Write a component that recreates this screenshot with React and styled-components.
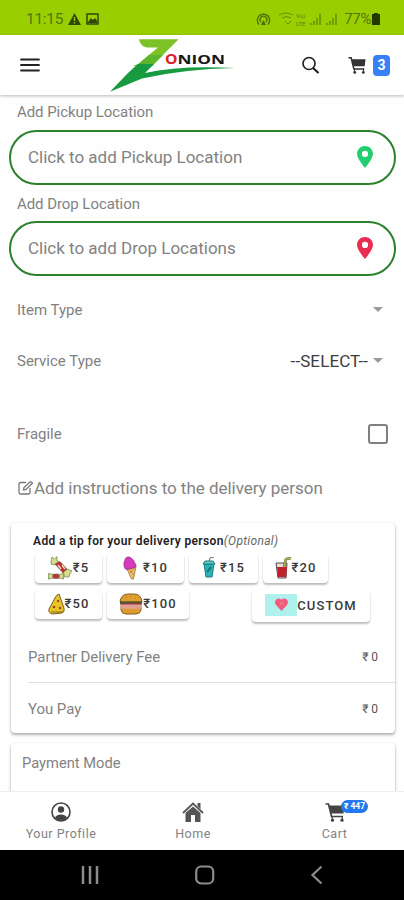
import React from "react";
import styled, { createGlobalStyle } from "styled-components";

const GlobalStyle = createGlobalStyle`
  * {
    box-sizing: border-box;
  }
  body {
    margin: 0;
    background: #fff;
    font-family: Roboto, "Noto Sans", sans-serif;
    color: #828282;
  }
  svg {
    display: block;
    flex: none;
  }
`;

const Screen = styled.div`
  width: 404px;
  height: 900px;
  display: flex;
  flex-direction: column;
  overflow: hidden;
  background: #fefefe;
`;

const StatusBar = styled.div`
  height: 35px;
  flex: none;
  display: flex;
  align-items: center;
  padding: 3px 24px 0 26px;
  background: #99cf00;
  color: #56750c;
  font-size: 15.5px;
`;
const Clock = styled.span`
  width: 42px;
  letter-spacing: -0.3px;
`;
const StatusIcons = styled.div`
  display: flex;
  align-items: center;
  gap: 5px;
  flex: 1;
`;
const Battery = styled.span`
  margin-left: 2px;
  margin-right: 1px;
  font-size: 15px;
  letter-spacing: -0.4px;
`;

const Header = styled.header`
  height: 60px;
  flex: none;
  display: flex;
  align-items: center;
  padding: 0 14px 0 20px;
  background: #fff;
  box-shadow: 0 1px 3px rgba(0, 0, 0, 0.28);
  z-index: 1;
`;
const LogoSlot = styled.div`
  margin-left: 68px;
  margin-right: 65px;
`;
const CartCount = styled.span`
  width: 17px;
  height: 21px;
  margin-left: 7px;
  border-radius: 4px;
  background: #3880f8;
  color: #fff;
  font-size: 14px;
  font-weight: 700;
  line-height: 20px;
  text-align: center;
`;

const Content = styled.main`
  flex: 1;
  min-height: 0;
  overflow: hidden;
  padding-top: 2px;
`;
const FieldLabel = styled.div`
  height: ${(p) => p.$height}px;
  padding-left: 17px;
  line-height: ${(p) => p.$line}px;
  font-size: 15px;
  letter-spacing: -0.06px;
`;
const Pill = styled.div`
  height: 55px;
  margin: 0 8px 0 9px;
  padding: 0 21px 2px 17px;
  display: flex;
  align-items: center;
  justify-content: space-between;
  border: 2px solid #2c812f;
  border-radius: 28px;
  font-size: 17px;
`;

const Row = styled.div`
  height: ${(p) => p.$height}px;
  display: flex;
  align-items: center;
  margin-top: ${(p) => p.$top || 0}px;
  padding: 0 21px 0 17px;
  font-size: 15px;
`;
const Spacer = styled.span`
  flex: 1;
`;
const Value = styled.span`
  color: #3c3c3c;
  font-size: 17px;
  letter-spacing: 0.1px;
`;
const Caret = styled.span`
  margin: 0 0 1px 5px;
  border: 5px solid transparent;
  border-top-color: #999;
  border-bottom: 0;
`;
const Checkbox = styled.span`
  width: 20px;
  height: 20px;
  margin-right: -5px;
  border: 2px solid #808080;
  border-radius: 3px;
`;
const Instructions = styled.div`
  height: 61px;
  display: flex;
  align-items: center;
  padding: 0 0 9px 17px;
  font-size: 17px;
  letter-spacing: -0.03px;
`;

const Card = styled.section`
  height: ${(p) => p.$height}px;
  margin: 0 9px 10px 11px;
  border-radius: 4px;
  background: #fff;
  box-shadow: 0 2px 3px rgba(0, 0, 0, 0.3), 0 0 2px rgba(0, 0, 0, 0.1);
`;
const TipTitle = styled.div`
  height: 31px;
  padding: 9px 0 0 22px;
  color: #222;
  font-size: 12px;
  font-weight: 600;
  line-height: 18px;
  letter-spacing: 0.37px;
  white-space: nowrap;

  em {
    color: #666;
    font-weight: 400;
    letter-spacing: 0.3px;
  }
`;
const Tips = styled.div`
  display: flex;
  height: ${(p) => p.$height}px;
  padding-left: 24px;
  gap: 5px;
`;
const TipButton = styled.div`
  width: ${(p) => p.$width}px;
  height: ${(p) => p.$height || 29}px;
  margin-left: ${(p) => p.$push || 0}px;
  display: flex;
  align-items: center;
  justify-content: center;
  gap: ${(p) => p.$gap || 0}px;
  padding-bottom: 2px;
  border-radius: 4px;
  background: #fff;
  box-shadow: 0 2px 2px rgba(0, 0, 0, 0.25), 0 0 2px rgba(0, 0, 0, 0.06);
  color: #3a3a3a;
  font-size: 13px;
  font-weight: 500;
  letter-spacing: 1.1px;
  white-space: nowrap;
`;
const FeeRow = styled.div`
  height: 51px;
  margin-left: 17px;
  padding-right: 17px;
  display: flex;
  align-items: center;
  justify-content: space-between;
  border-bottom: ${(p) => (p.$line ? "1px solid #ddd" : "0")};
  font-size: 15px;
  letter-spacing: -0.06px;
`;
const Amount = styled.span`
  color: #555;
  font-size: 12px;
`;
const CardTitle = styled.div`
  padding: 11px 0 0 11px;
  font-size: 14.7px;
  line-height: 18px;
`;

const TabBar = styled.nav`
  height: 59px;
  flex: none;
  display: flex;
  padding: 0 0 0 1px;
  border-top: 1px solid #eee;
  background: #fff;
  z-index: 1;
`;
const Tab = styled.div`
  position: relative;
  width: ${(p) => p.$width}px;
  display: flex;
  flex-direction: column;
  align-items: center;
  padding-top: 10px;
  font-size: 12.5px;
  line-height: 15px;
  letter-spacing: 0.5px;

  svg {
    margin-bottom: 4px;
  }
`;
const TabBadge = styled.span`
  position: absolute;
  top: 8px;
  left: 76px;
  width: 27px;
  height: 13px;
  border-radius: 7px;
  background: #2478f0;
  color: #fff;
  font-size: 8.5px;
  font-weight: 700;
  line-height: 13px;
  letter-spacing: 0;
  text-align: center;
`;
const SystemBar = styled.div`
  height: 50px;
  flex: none;
  display: flex;
  align-items: center;
  justify-content: space-between;
  padding: 0 80px;
  background: #000;
`;

const Logo = () => (
  <svg width="128" height="56" viewBox="0 0 128 56">
    <path d="M31 2.3H70.5L44 29H25L30 27L50 10.5H39Q32 9 31 2.3Z" fill="#7cc125" />
    <path d="M34 24L41 18H55L44 29L40 32L25 32Z" fill="#5cb52c" />
    <path d="M30 27H46L37 36Q72 28 127 31Q76 32 34 41.5L2 54.8L20 36Z" fill="#179a40" />
    <g fontFamily="'Open Sans', sans-serif" fontWeight="700">
      <text x="57" y="27.4" fontSize="13.5" fill="#d9202c" textLength="12.5" lengthAdjust="spacingAndGlyphs">O</text>
      <text x="69.5" y="27.4" fontSize="13" fill="#171717" textLength="47.5" lengthAdjust="spacingAndGlyphs">NION</text>
    </g>
  </svg>
);

const CartIcon = ({ size, color = "#333" }) => (
  <svg width={size} height={size} viewBox="0 0 20 20" fill="none" stroke={color}>
    <path d="M0.5 2H3.5L6.5 14.5H18" strokeWidth="1.7" />
    <path d="M4 3.5H19.5L18.5 11.5H6Z" fill={color} stroke="none" />
    <circle cx="7.5" cy="18.2" r="1.6" fill={color} stroke="none" />
    <circle cx="17" cy="18.2" r="1.6" fill={color} stroke="none" />
    <path d="M7.2 14V17M17.3 14V17" strokeWidth="1.2" />
  </svg>
);

const Pin = ({ color }) => (
  <svg width="16" height="22" viewBox="0 0 16 22">
    <path
      d="M8 0C3.6 0 0 3.4 0 7.8C0 13 8 22 8 22S16 13 16 7.8C16 3.4 12.4 0 8 0ZM8 11A3.1 3.1 0 1 1 8 4.8A3.1 3.1 0 0 1 8 11Z"
      fill={color}
      fillRule="evenodd"
    />
  </svg>
);

const Candy = () => (
  <svg width="25" height="24" viewBox="0 0 25 24" stroke="#5d6540" strokeWidth="0.6">
    <path d="M3 6L4 1L6.5 3L9 0.5V5L11 6L7 9L3 8Z" fill="#d6dd88" />
    <path d="M7 8L12 5.5L19 13L15 17Z" fill="#c72b38" />
    <path d="M10 9L13 13M14 9L17 13" stroke="#eee8c4" strokeWidth="1.3" />
    <path d="M15.5 16.5L19 13L24 15L22 17.5L21 21L16.5 21Z" fill="#d6dd88" />
    <path d="M0.5 17.5L5 18.5V22L0.5 23ZM11 18.5L15.5 17.5V23L11 22Z" fill="#d6dd88" />
    <rect x="5" y="18" width="6" height="4.5" rx="1.5" fill="#c72b38" />
  </svg>
);

const IceCream = () => (
  <svg width="14" height="24" viewBox="0 0 14 24" strokeWidth="0.7">
    <path d="M3.5 12L13 10.5L10.5 23H8.5Z" fill="#f1bf60" stroke="#8b6134" />
    <path d="M6 13L11 19M11.5 12L7 17" stroke="#95683d" strokeWidth="0.6" />
    <path d="M1 8C0.5 6 2 5 2 3.5C2.5 0.5 7 0 8.5 2.5C11 3.5 11 6 12.5 8C14 10.5 12 12 10 12L4 13.5C1 13 1 10 1 8Z" fill="#d43abb" stroke="#8d287e" />
  </svg>
);

const Cup = () => (
  <svg width="14" height="21" viewBox="0 0 14 21">
    <path d="M7 5L8 1L12 0" fill="none" stroke="#4d7775" />
    <path d="M2 7L4 20H10L12 7Z" fill="#24b6b6" stroke="#28777b" />
    <path d="M1 7L3 4H11L13 7Z" fill="#59cccb" stroke="#28777b" />
    <path d="M5 15L9 10" stroke="#176d70" strokeWidth="2" />
  </svg>
);

const Juice = () => (
  <svg width="17" height="22" viewBox="0 0 17 22">
    <path d="M1 6H12L11 21H3Z" fill="#e7dfdf" stroke="#54494b" />
    <path d="M2 10H12L11 20H3Z" fill="#c3202d" />
    <path d="M9 10L11 2L16 1" fill="none" stroke="#58612d" strokeWidth="2.6" />
    <path d="M9 10L11 2L16 1" fill="none" stroke="#b0b750" strokeWidth="1.5" />
  </svg>
);

const Pizza = () => (
  <svg width="17" height="22" viewBox="0 0 17 22">
    <path d="M11 1Q8 2 7 5L1 16Q0 20 4 21L14 20Q17 19 16 15Z" fill="#e8c628" stroke="#755d22" />
    <circle cx="10" cy="8" r="1.2" fill="#a54422" />
    <circle cx="6" cy="14" r="1.3" fill="#a54422" />
    <circle cx="12" cy="15" r="1.3" fill="#a54422" />
    <path d="M3 19H15" stroke="#896622" />
  </svg>
);

const Burger = () => (
  <svg width="24" height="22" viewBox="0 0 24 22">
    <path d="M1 9Q2 1 9 1H15Q22 1 23 9Z" fill="#dda02f" stroke="#8c5b20" />
    <path d="M2 14H22V17Q21 21 17 21H7Q3 21 2 17Z" fill="#d99b32" stroke="#8c5b20" />
    <path d="M1 8.5H23V11.5H1Z" fill="#4a5730" />
    <path d="M2 11H22" stroke="#b52e3a" strokeWidth="1.2" />
    <rect x="1" y="11.8" width="22" height="4" rx="1" fill="#e2a093" />
    <path d="M7 4H8M11 3H12M16 5H17" stroke="#b47425" />
  </svg>
);

const Heart = () => (
  <svg width="32" height="22" viewBox="0 0 32 22">
    <rect width="32" height="22" fill="#aef1ed" />
    <path d="M16.5 17L11 11C8 7 13 2 16.5 6C20 2 25 7 22 11Z" fill="#f35b83" />
    <path d="M14.5 8L18.5 10.5M15 10.5L18 8" stroke="#ef8b69" />
  </svg>
);

const StatusGlyphs = () => (
  <svg width="86" height="16" viewBox="0 0 86 16" fill="none" stroke="#4c6c0c">
    <path d="M3 13.5A6.2 6.2 0 1 1 12 13.5M5 11A3.4 3.4 0 1 1 10 11" strokeWidth="1.3" />
    <path d="M7.5 9L5 14H10Z" fill="#4c6c0c" stroke="none" />
    <path d="M23 4Q30 0 37 4M26 7Q30 4 35 7M29 10L32 13L35 10" opacity=".65" />
    <g fill="#4c6c0c" stroke="none" opacity=".8">
      <text x="40" y="6.5" fontSize="6">Vo)</text>
      <text x="40" y="14.5" fontSize="6">LTE</text>
    </g>
    <path d="M55 14V12M58 14V10M61 14V7M64 14V3M71 14V12M74 14V10M77 14V7M80 14V3" strokeWidth="1.3" opacity=".75" />
  </svg>
);

const App = () => (
  <Screen>
    <GlobalStyle />
    <StatusBar>
      <Clock>11:15</Clock>
      <StatusIcons>
        <svg width="13" height="12" viewBox="0 0 13 12">
          <path d="M6.5 0L13 12H0Z" fill="#304708" />
          <path d="M6.5 4V8M6.5 9V10.5" stroke="#99cf00" strokeWidth="1.3" />
        </svg>
        <svg width="13" height="12" viewBox="0 0 13 12">
          <rect x="1" y="1" width="11" height="10" fill="none" stroke="#304708" strokeWidth="1.5" />
          <path d="M2 9L5 5L7 7L9 5L11 8V10H2Z" fill="#304708" />
        </svg>
      </StatusIcons>
      <StatusGlyphs />
      <Battery>77%</Battery>
      <svg width="8" height="12" viewBox="0 0 8 12">
        <path d="M2 0H6V1H8V12H0V1H2Z" fill="#253800" />
      </svg>
    </StatusBar>

    <Header>
      <svg width="20" height="14" viewBox="0 0 20 14" stroke="#222" strokeWidth="1.8" strokeLinecap="round">
        <path d="M1 1.5H19M1 7H19M1 12.5H19" />
      </svg>
      <LogoSlot><Logo /></LogoSlot>
      <svg width="19" height="18" viewBox="0 0 19 18" fill="none" stroke="#222">
        <circle cx="8" cy="7.5" r="6" strokeWidth="1.7" />
        <path d="M12 12L17.5 17" strokeWidth="2.2" />
      </svg>
      <Spacer />
      <CartIcon size={18} />
      <CartCount>3</CartCount>
    </Header>

    <Content>
      <FieldLabel $height={33} $line={31}>Add Pickup Location</FieldLabel>
      <Pill>
        Click to add Pickup Location
        <Pin color="#22ce70" />
      </Pill>
      <FieldLabel $height={36} $line={38}>Add Drop Location</FieldLabel>
      <Pill>
        Click to add Drop Locations
        <Pin color="#e92d52" />
      </Pill>
      <Row $height={68}>
        Item Type
        <Spacer />
        <Caret />
      </Row>
      <Row $height={34}>
        Service Type
        <Spacer />
        <Value>--SELECT--</Value>
        <Caret />
      </Row>
      <Row $height={56} $top={28}>
        Fragile
        <Spacer />
        <Checkbox />
      </Row>
      <Instructions>
        <svg width="17" height="16" viewBox="0 0 17 16" fill="none" stroke="#777" strokeWidth="1.3">
          <path d="M9 2.5H3.5Q2 2.5 2 4V12.5Q2 14 3.5 14H11.5Q13 14 13 12.5V8M7 7.5L6.5 10L9 9.5L15.5 3L13.5 1.5Z" />
        </svg>
        Add instructions to the delivery person
      </Instructions>

      <Card $height={210}>
        <TipTitle>Add a tip for your delivery person<em>(Optional)</em></TipTitle>
        <Tips $height={36}>
          <TipButton $width={67}><Candy />₹5</TipButton>
          <TipButton $width={77} $gap={6}><IceCream />₹10</TipButton>
          <TipButton $width={69} $gap={4}><Cup />₹15</TipButton>
          <TipButton $width={65}><Juice />₹20</TipButton>
        </Tips>
        <Tips $height={42}>
          <TipButton $width={67}><Pizza />₹50</TipButton>
          <TipButton $width={82}><Burger />₹100</TipButton>
          <TipButton $width={118} $height={32} $push={58}><Heart />CUSTOM</TipButton>
        </Tips>
        <FeeRow $line>Partner Delivery Fee<Amount>₹ 0</Amount></FeeRow>
        <FeeRow>You Pay<Amount>₹ 0</Amount></FeeRow>
      </Card>
      <Card $height={90}>
        <CardTitle>Payment Mode</CardTitle>
      </Card>
    </Content>

    <TabBar>
      <Tab $width={120}>
        <svg width="20" height="20" viewBox="0 0 20 20">
          <circle cx="10" cy="10" r="9" fill="none" stroke="#444" strokeWidth="1.6" />
          <circle cx="10" cy="7.5" r="3.2" fill="#444" />
          <path d="M4 16Q5 12.5 10 12.5T16 16Q10 21 4 16Z" fill="#444" />
        </svg>
        Your Profile
      </Tab>
      <Tab $width={144}>
        <svg width="22" height="20" viewBox="0 0 22 20">
          <path d="M1 11L11 1.5L21 11" fill="none" stroke="#555" strokeWidth="1.8" />
          <path d="M3.5 11L11 4.5L18.5 11V20H13V13H9V20H3.5ZM15.5 1H18.5V7L15.5 4Z" fill="#555" />
        </svg>
        Home
      </Tab>
      <Tab $width={139}>
        <CartIcon size={20} color="#444" />
        <TabBadge>₹ 447</TabBadge>
        Cart
      </Tab>
    </TabBar>

    <SystemBar>
      <svg width="20" height="20" viewBox="0 0 20 20" stroke="#8c8c8c" strokeWidth="2.5">
        <path d="M3 1V19M10 1V19M17 1V19" />
      </svg>
      <svg width="20" height="20" viewBox="0 0 20 20">
        <rect x="0" y="1.5" width="17" height="17" rx="5" fill="none" stroke="#8c8c8c" strokeWidth="2.2" transform="translate(1.2 0)" />
      </svg>
      <svg width="14" height="20" viewBox="0 0 14 20" fill="none" stroke="#8c8c8c" strokeWidth="2.2">
        <path d="M11.5 1.5L2.5 10L11.5 18.5" />
      </svg>
    </SystemBar>
  </Screen>
);

export default App;
